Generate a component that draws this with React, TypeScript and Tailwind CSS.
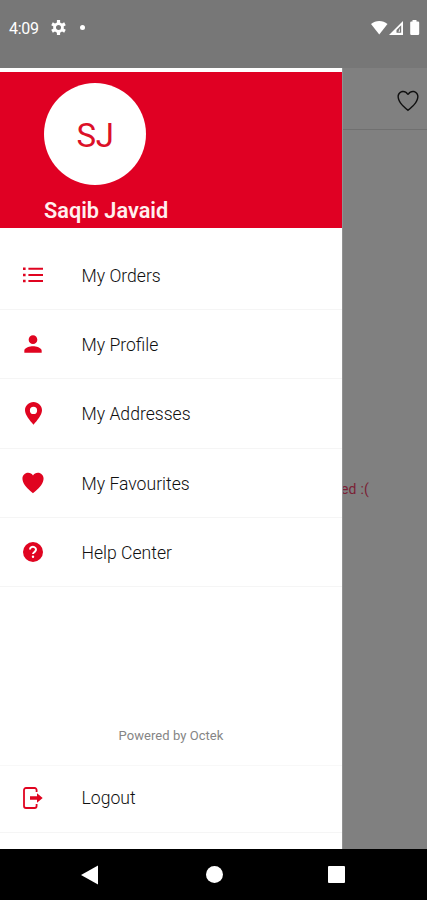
import { ReactNode } from "react";
import { IoIosHeart, IoIosHeartEmpty } from "react-icons/io";
import { MdPerson } from "react-icons/md";

type ItemProps = {
  icon: ReactNode;
  label: string;
  className: string;
};

const ListIcon = () => (
  <svg width="20" height="16" viewBox="0 0 20 16" fill="currentColor">
    <path d="M0 .5h2.6v2.4H0zM0 6.8h2.6v2.4H0zM0 12.8h2.6v2.4H0z" />
    <path d="M5.4.7H20v2H5.4zM5.4 7H20v2H5.4zM5.4 13H20v2H5.4z" />
  </svg>
);

const PinIcon = () => (
  <svg width="17" height="23" viewBox="0 0 17 23" fill="currentColor">
    <path
      fillRule="evenodd"
      d="M8.500 0C3.800 0 0 3.700 0 8.300 0 13 5 18.800 8.500 22.700 12 18.800 17 13 17 8.300 17 3.700 13.200 0 8.500 0zm0 4.800a3.600 3.600 0 1 1 0 7.200 3.600 3.600 0 0 1 0-7.200z"
    />
  </svg>
);

const HelpIcon = () => (
  <svg width="20" height="20" viewBox="0 0 20 20" fill="none">
    <circle cx="10" cy="10" r="10" fill="currentColor" />
    <path d="M7 7.500a3 2.700 0 1 1 4.900 2.100c-1.200.9-1.900 1.200-1.900 2.500" stroke="white" strokeWidth="2" />
    <circle cx="10" cy="14.800" r="1.200" fill="white" />
  </svg>
);

const LogoutIcon = () => (
  <svg width="20" height="22" viewBox="0 0 20 22" fill="none">
    <path
      d="M13.600 5V3a2 2 0 0 0-2-2H3a2 2 0 0 0-2 2v16a2 2 0 0 0 2 2h8.600a2 2 0 0 0 2-2v-2"
      stroke="currentColor"
      strokeWidth="1.800"
    />
    <path d="M7 9.200h7V6.300l5.700 4.700-5.700 4.700v-2.900H7z" fill="currentColor" />
  </svg>
);

const items = [
  { label: "My Orders", icon: <ListIcon /> },
  { label: "My Profile", icon: <MdPerson className="size-[26px] shrink-0" /> },
  { label: "My Addresses", icon: <PinIcon /> },
  { label: "My Favourites", icon: <IoIosHeart className="size-[26px] shrink-0" /> },
  { label: "Help Center", icon: <HelpIcon /> },
];

const DrawerItem = ({ icon, label, className }: ItemProps) => (
  <div className={`flex items-center border-b border-[#f5f5f5] ${className}`}>
    <div className="ml-[18px] flex w-[30px] shrink-0 justify-center text-[#e00420]">{icon}</div>
    <span className="ml-[33.500px] pt-[3.500px] text-[17.600px] font-light leading-none text-[#101010]">{label}</span>
  </div>
);

const GearIcon = () => (
  <svg width="15" height="15" viewBox="0 0 16 16" fill="none">
    <circle cx="8" cy="8" r="4.200" stroke="currentColor" strokeWidth="3" />
    <path
      d="M8 0v3.500M8 12.500V16M1.100 4l3 1.700M11.900 10.300l3 1.700M1.100 12l3-1.700M11.900 5.700l3-1.700"
      stroke="currentColor"
      strokeWidth="3.400"
    />
  </svg>
);

const StatusBar = () => (
  <div className="flex h-[68px] shrink-0 items-start bg-[#777777] pt-[18px] text-white">
    <div className="flex h-[19px] items-center pl-[9px]">
      <span className="w-[42px] pt-[2px] text-[16px] leading-none tracking-[-0.3px]">4:09</span>
      <GearIcon />
      <span className="ml-[13.500px] size-[5px] rounded-full bg-white" />
    </div>
    <svg className="ml-auto mt-[1.500px] mr-[7px]" width="49" height="16" viewBox="0 0 49 16" fill="currentColor">
      <path d="M0 4.100C4.600-.1 11.900-.1 16.500 4.100L8.250 14.500z" />
      <path d="M18 15 32 1v14z" />
      <path d="M25.500 12.800V10l4.700-4.700v7.500z" fill="#777777" />
      <path d="M27.500 11.800h1.300V8z" />
      <path d="M41.500 0h4v1.400h1.500q1.200 0 1.200 1.200v11.200q0 1.200-1.200 1.200h-6.600q-1.200 0-1.200-1.200V2.600q0-1.200 1.200-1.200h1.100z" />
    </svg>
  </div>
);

const Drawer = () => (
  <aside className="flex w-[342px] shrink-0 flex-col bg-white pt-1">
    <header className="h-[156px] shrink-0 bg-[#e00023] pt-[11px] pl-[44px]">
      <div className="flex size-[102px] items-center justify-center rounded-full bg-white pt-[2px] text-[33px] leading-none tracking-[-0.5px] text-[#dc1028]">
        SJ
      </div>
      <h1 className="mt-[14px] text-[21.700px] font-semibold leading-[24px] text-[#fff0ef]">Saqib Javaid</h1>
    </header>
    <nav className="mt-[13px] shrink-0">
      {items.map((item) => (
        <DrawerItem key={item.label} icon={item.icon} label={item.label} className="h-[69.200px]" />
      ))}
    </nav>
    <div className="mt-auto">
      <p className="border-b border-[#f8f8f8] pb-[21px] text-center text-[13px] leading-[16px] tracking-[0.05px] text-[#858585]">
        Powered by Octek
      </p>
      <DrawerItem icon={<LogoutIcon />} label="Logout" className="mb-4 h-[67px] pb-[3px]" />
    </div>
  </aside>
);

const Page = () => (
  <main className="flex min-w-0 flex-1 flex-col overflow-hidden border-l border-[#929292] bg-[#808080]">
    <div className="flex h-[62px] shrink-0 items-center justify-end border-b border-[#707070] pt-1 pr-[6px]">
      <IoIosHeartEmpty className="size-[26px] text-[#101010]" />
    </div>
    <p className="mt-[351px] -ml-[2px] whitespace-nowrap text-[14px] leading-[16px] tracking-[0.200px] text-[#7b2035]">ed :(</p>
  </main>
);

const NavigationBar = () => (
  <div className="flex h-[51px] shrink-0 items-center bg-black text-white">
    <svg className="ml-[81px]" width="17" height="20" viewBox="0 0 17 20" fill="currentColor">
      <path d="M0 10 17 .5v19z" />
    </svg>
    <span className="ml-[107.500px] size-[17px] rounded-full bg-white" />
    <span className="ml-[105.500px] size-[17px] rounded-[1px] bg-white" />
  </div>
);

export default function App() {
  return (
    <div className="flex h-[900px] w-[427px] flex-col overflow-hidden font-['Roboto',sans-serif]">
      <StatusBar />
      <div className="flex min-h-0 flex-1">
        <Drawer />
        <Page />
      </div>
      <NavigationBar />
    </div>
  );
}
